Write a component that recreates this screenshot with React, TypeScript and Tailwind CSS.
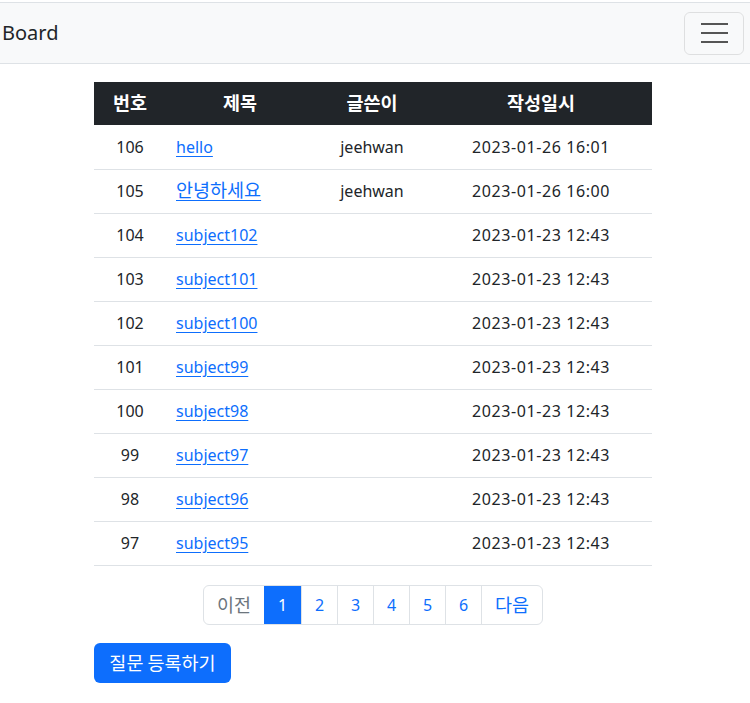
import React from "react";

const rows = [
  { n: 106, t: "hello", k: false, a: "jeehwan", d: "2023-01-26 16:01" },
  { n: 105, t: "안녕하세요", k: true, a: "jeehwan", d: "2023-01-26 16:00" },
  { n: 104, t: "subject102", k: false, a: "", d: "2023-01-23 12:43" },
  { n: 103, t: "subject101", k: false, a: "", d: "2023-01-23 12:43" },
  { n: 102, t: "subject100", k: false, a: "", d: "2023-01-23 12:43" },
  { n: 101, t: "subject99", k: false, a: "", d: "2023-01-23 12:43" },
  { n: 100, t: "subject98", k: false, a: "", d: "2023-01-23 12:43" },
  { n: 99, t: "subject97", k: false, a: "", d: "2023-01-23 12:43" },
  { n: 98, t: "subject96", k: false, a: "", d: "2023-01-23 12:43" },
  { n: 97, t: "subject95", k: false, a: "", d: "2023-01-23 12:43" },
];

function K({ children }: { children: React.ReactNode }) {
  return (
    <span
      className="text-[18.5px] leading-none"
      style={{ fontFamily: '"Noto Sans CJK KR", sans-serif' }}
    >
      {children}
    </span>
  );
}

export default function App() {
  return (
    <div
      className="min-h-[703px] bg-white text-[16px] text-[#212529]"
      style={{ fontFamily: '"Noto Sans", "Noto Sans CJK KR", sans-serif' }}
    >
      <nav className="mt-[2px] flex h-[62px] items-center justify-between border-y border-[#dee2e6] bg-[#f8f9fa] pl-[2px] pr-[6px]">
        <span className="text-[20px] leading-none text-[#212529]">Board</span>
        <button className="flex h-[43px] w-[60px] flex-col items-center justify-center gap-[7px] rounded-[6px] border border-[rgba(0,0,0,0.1)]">
          <span className="block h-[2px] w-[27px] bg-[#555]" />
          <span className="block h-[2px] w-[27px] bg-[#555]" />
          <span className="block h-[2px] w-[27px] bg-[#555]" />
        </button>
      </nav>

      <div className="ml-[94px] w-[558px] pt-[18px]">
        <table className="w-full border-collapse">
          <thead>
            <tr className="h-[43px] bg-[#212529] text-white">
              <th className="w-[72px] text-center font-bold"><K>번호</K></th>
              <th className="w-[148px] text-center font-bold"><K>제목</K></th>
              <th className="w-[116px] text-center font-bold"><K>글쓴이</K></th>
              <th className="text-center font-bold"><K>작성일시</K></th>
            </tr>
          </thead>
          <tbody>
            {rows.map((r) => (
              <tr key={r.n} className="h-[44px] border-b border-[#dee2e6]">
                <td className="text-center">{r.n}</td>
                <td className="pl-[10px] text-left">
                  <a className="text-[#0d6efd] underline underline-offset-[3px]" href="#">
                    {r.k ? <K>{r.t}</K> : r.t}
                  </a>
                </td>
                <td className="text-center">{r.a}</td>
                <td className="text-center tracking-[0.6px]">{r.d}</td>
              </tr>
            ))}
          </tbody>
        </table>

        <div className="mt-[19px] flex justify-center">
          <div className="flex h-[40px] overflow-hidden rounded-[6px] border border-[#dee2e6]">
            <span className="flex w-[60px] items-center justify-center text-[#6c757d]"><K>이전</K></span>
            <span className="flex w-[37px] items-center justify-center bg-[#0d6efd] text-white">1</span>
            {[2, 3, 4, 5, 6].map((p) => (
              <span
                key={p}
                className="flex w-[36px] items-center justify-center border-l border-[#dee2e6] text-[#0d6efd]"
              >
                {p}
              </span>
            ))}
            <span className="flex w-[61px] items-center justify-center border-l border-[#dee2e6] text-[#0d6efd]">
              <K>다음</K>
            </span>
          </div>
        </div>

        <button className="mt-[18px] flex h-[40px] w-[137px] items-center justify-center rounded-[6px] bg-[#0d6efd] text-white">
          <K>질문 등록하기</K>
        </button>
      </div>
    </div>
  );
}
